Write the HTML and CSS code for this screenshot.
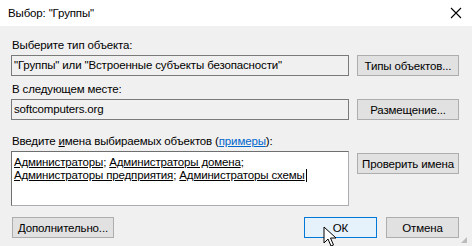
FILE: index.html
```html
<!DOCTYPE html>
<html lang="ru">
<head>
  <meta charset="UTF-8" />
  <title>Выбор: "Группы"</title>
  <link rel="stylesheet" href="styles.css">
</head>
<body>
  <div class="dialog">
    <div class="titlebar">
      <span class="title">Выбор: "Группы"</span>
      <svg class="close" width="12" height="12" viewBox="0 0 12 12">
        <path d="M1 1 L11 11 M11 1 L1 11" stroke="#000" stroke-width="1.1" fill="none" />
      </svg>
    </div>

    <div class="content">
      <div class="label first">Выберите тип объекта:</div>
      <div class="row">
        <div class="field">"Группы" или "Встроенные субъекты безопасности"</div>
        <button class="btn">Типы объектов...</button>
      </div>

      <div class="label">В следующем месте:</div>
      <div class="row">
        <div class="field">softcomputers.org</div>
        <button class="btn">Размещение...</button>
      </div>

      <div class="label names-label">Введите <u>и</u>мена выбираемых объектов (<a class="link" href="#">примеры</a>):</div>
      <div class="row top">
        <div class="names">
          <u>Администраторы</u>; <u>Администраторы домена</u>;<br>
          <u>Администраторы предприятия</u>; <u>Администраторы схемы</u><span class="caret"></span>
        </div>
        <button class="btn check">Проверить имена</button>
      </div>

      <div class="footer">
        <button class="btn">Дополнительно...</button>
        <div class="footer-right">
          <button class="btn ok">ОК</button>
          <button class="btn">Отмена</button>
        </div>
      </div>
    </div>

    <div class="grip"></div>

    <svg class="pointer" width="14" height="22" viewBox="0 0 14 22">
      <path d="M1 1 L1 17 L5 13 L8 20 L10.5 19 L7.5 12 L13 12 Z" fill="#fff" stroke="#000" stroke-width="1" stroke-linejoin="miter" />
    </svg>
  </div>
</body>
</html>
```

FILE: styles.css
```css
html, body {
  margin: 0;
  padding: 0;
}

body {
  width: 472px;
  height: 246px;
  overflow: hidden;
  font-family: "Liberation Sans", Arial, sans-serif;
  font-size: 11.5px;
  letter-spacing: -0.15px;
  color: #000;
}

.dialog {
  position: relative;
  width: 472px;
  height: 246px;
  background: #f0f0f0;
}

.titlebar {
  height: 26px;
  background: #fff;
  display: flex;
  align-items: center;
  justify-content: space-between;
  padding: 0 10px 0 8px;
}

.close {
  display: block;
}

.content {
  padding: 0 13px 0 11px;
}

.label {
  height: 16px;
  line-height: 16px;
  margin-top: 5px;
  margin-bottom: 2px;
  padding-left: 1px;
}

.label.first {
  margin-top: 11px;
}

.label.names-label {
  margin-top: 13px;
}

.link {
  color: #0066cc;
}

.row {
  display: flex;
  align-items: center;
  gap: 8px;
}

.row.top {
  align-items: flex-start;
}

.field {
  box-sizing: border-box;
  width: 338px;
  height: 21px;
  line-height: 19px;
  border: 1px solid #7a7a7a;
  background: #f0f0f0;
  padding-left: 2px;
  white-space: nowrap;
  overflow: hidden;
}

.btn {
  box-sizing: border-box;
  width: 102px;
  height: 21px;
  padding: 0;
  font-family: inherit;
  font-size: 11.5px;
  letter-spacing: -0.15px;
  color: #000;
  background: #e1e1e1;
  border: 1px solid #adadad;
}

.names {
  box-sizing: border-box;
  width: 338px;
  height: 55px;
  background: #fff;
  border: 1px solid #abadb3;
  border-left-color: #6f6f6f;
  border-top-color: #6f6f6f;
  padding: 4px 2px;
  line-height: 13px;
}

.caret {
  display: inline-block;
  width: 1px;
  height: 13px;
  background: #000;
  vertical-align: -3px;
  margin-left: 1px;
}

.check {
  margin-top: 2px;
}

.footer {
  display: flex;
  justify-content: space-between;
  margin-top: 11px;
  padding-left: 1px;
}

.footer-right {
  display: flex;
  gap: 9px;
}

.footer-right .btn {
  width: 73px;
}

.btn.ok {
  background: #e5f1fb;
  border-color: #0078d7;
}

.grip {
  position: absolute;
  right: 5px;
  bottom: 3px;
  width: 6px;
  height: 6px;
  background-image: radial-gradient(circle, #bcbcbc 0.8px, transparent 1px);
  background-size: 2px 2px;
  clip-path: polygon(100% 0, 100% 100%, 0 100%);
}

.pointer {
  position: absolute;
  left: 323px;
  top: 226px;
}
```
